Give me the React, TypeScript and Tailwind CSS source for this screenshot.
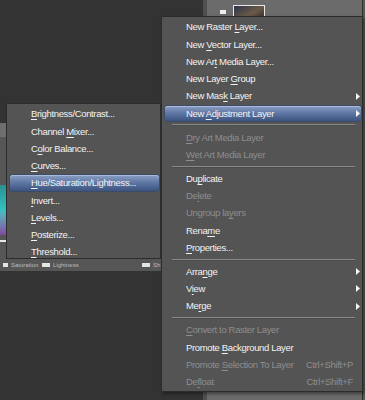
import React from 'react';

type Entry = { t: string; dis?: boolean; sub?: boolean; hi?: boolean; key?: string } | 'sep';

const mainItems: Entry[] = [
  { t: 'New Raster &Layer...' },
  { t: 'New &Vector Layer...' },
  { t: 'New Ar&t Media Layer...' },
  { t: 'New Layer &Group' },
  { t: 'New Mas&k Layer', sub: true },
  { t: 'New &Adjustment Layer', sub: true, hi: true },
  'sep',
  { t: '&Dry Art Media Layer', dis: true },
  { t: '&Wet Art Media Layer', dis: true },
  'sep',
  { t: 'Du&plicate' },
  { t: 'De&lete', dis: true },
  { t: 'Ungroup la&yers', dis: true },
  { t: 'Rena&me' },
  { t: '&Properties...' },
  'sep',
  { t: 'Arra&nge', sub: true },
  { t: 'V&iew', sub: true },
  { t: 'Me&rge', sub: true },
  'sep',
  { t: '&Convert to Raster Layer', dis: true },
  { t: 'Promote &Background Layer' },
  { t: 'Promote &Selection To Layer', dis: true, key: 'Ctrl+Shift+P' },
  { t: 'De&float', dis: true, key: 'Ctrl+Shift+F' },
];

const adjustItems: Entry[] = [
  { t: '&Brightness/Contrast...' },
  { t: 'Channel &Mixer...' },
  { t: 'C&olor Balance...' },
  { t: '&Curves...' },
  { t: '&Hue/Saturation/Lightness...', hi: true },
  { t: '&Invert...' },
  { t: '&Levels...' },
  { t: '&Posterize...' },
  { t: '&Threshold...' },
];

// "&" marks the mnemonic letter
const Label = ({ text }: { text: string }) => {
  const i = text.indexOf('&');
  if (i < 0) return <>{text}</>;
  return (
    <>
      {text.slice(0, i)}
      <span className="underline underline-offset-[1.5px] decoration-[1px]">{text[i + 1]}</span>
      {text.slice(i + 2)}
    </>
  );
};

const Arrow = () => (
  <svg width="4" height="7" viewBox="0 0 4 7" className="shrink-0">
    <path d="M0 0 L4 3.5 L0 7 Z" fill="#f4f4f4" />
  </svg>
);

const MenuList = ({ items }: { items: Entry[] }) => (
  <>
    {items.map((it, idx) => {
      if (it === 'sep') {
        return (
          <div key={idx} className="h-[6.75px] flex items-center ml-[10px] mr-[7px]">
            <div className="w-full h-[2px] border-t border-[#8a8a8a] border-b border-b-[#4a4a4a]" />
          </div>
        );
      }
      return (
        <div key={idx} className="h-[17.25px] pl-[3px] pr-[1px] py-[1px]">
          <div
            className={
              'h-full flex items-center pl-[21px] pr-[1px] rounded-[3px] ' +
              (it.hi
                ? 'bg-gradient-to-b from-[#8a9fc4] via-[#5d75a2] to-[#3d5480] shadow-[inset_0_1px_0_#a9bbd8,0_0_0_1px_#3b4b68]'
                : '')
            }
          >
            <span className={'flex-1 whitespace-nowrap ' + (it.dis ? 'text-[#8e8e8e]' : 'text-[#f3f3f3]')}>
              <Label text={it.t} />
            </span>
            {it.key && <span className="text-[#8e8e8e] mr-[7px] whitespace-nowrap">{it.key}</span>}
            {it.sub && <Arrow />}
          </div>
        </div>
      );
    })}
  </>
);

export default function App() {
  return (
    <div className="relative w-[365px] h-[400px] overflow-hidden bg-[#333333] flex font-['Liberation_Sans',Arial,sans-serif] text-[9.5px] tracking-[-0.35px] leading-none">
      {/* left work area with the adjustment dialog under the menus */}
      <div className="w-[203px] shrink-0">
        <div className="mt-[123px] w-[161px] h-[148px] bg-[#565656] flex flex-col">
          <div className="h-[14px] bg-[#6e6e6e]" />
          <div className="flex-1 relative">
            <div className="mt-[48px] ml-0 w-[6px] h-[50px] bg-gradient-to-b from-[#2a8f8f] via-[#33c2c2] to-[#7a4aa0]" />
            <div className="ml-0 mt-[5px] w-[10px] h-[2px] bg-[#e8e8e8]" />
          </div>
          <div className="h-[12px] flex items-center gap-[3px] pl-[3px] text-[6px] text-[#bdbdbd] tracking-normal">
            <span className="w-[5px] h-[4px] bg-[#e4e4e4]" />
            <span className="w-[28px]">Saturation</span>
            <span className="w-[8px] h-[4px] bg-[#e4e4e4]" />
            <span className="w-[86px]">Lightness</span>
            <span className="w-[8px] h-[4px] bg-[#e4e4e4]" />
            <span>Sh</span>
          </div>
        </div>
      </div>

      {/* layers panel on the right */}
      <div className="flex-1 flex border-l-[4px] border-[#505050]">
        <div className="flex-1 bg-[#6b6b6b]">
          <div className="flex items-start pt-[5px] pl-[13px] gap-[7px]">
            <div className="mt-[5px] w-[6px] h-[4px] bg-[#eeeeee]" />
            <div className="w-[32px] h-[20px] border border-[#e8e8e8] bg-gradient-to-br from-[#2b3345] via-[#6b5a48] to-[#1e1e22]" />
          </div>
        </div>
        <div className="w-[1px] bg-[#303030]" />
        <div className="w-[2px] bg-[#5a5a5a]" />
      </div>

      {/* main context menu */}
      <div className="absolute left-[161px] top-[16px] w-[202px] bg-[#545454] border border-[#2c2c2c] pt-[1.5px] shadow-[2px_2px_3px_rgba(0,0,0,0.4)]">
        <MenuList items={mainItems} />
      </div>

      {/* adjustment layer submenu */}
      <div className="absolute left-[6px] top-[103px] w-[155px] h-[156px] overflow-hidden bg-[#545454] border border-[#2c2c2c] pt-[1.4px]">
        <MenuList items={adjustItems} />
      </div>
    </div>
  );
}
